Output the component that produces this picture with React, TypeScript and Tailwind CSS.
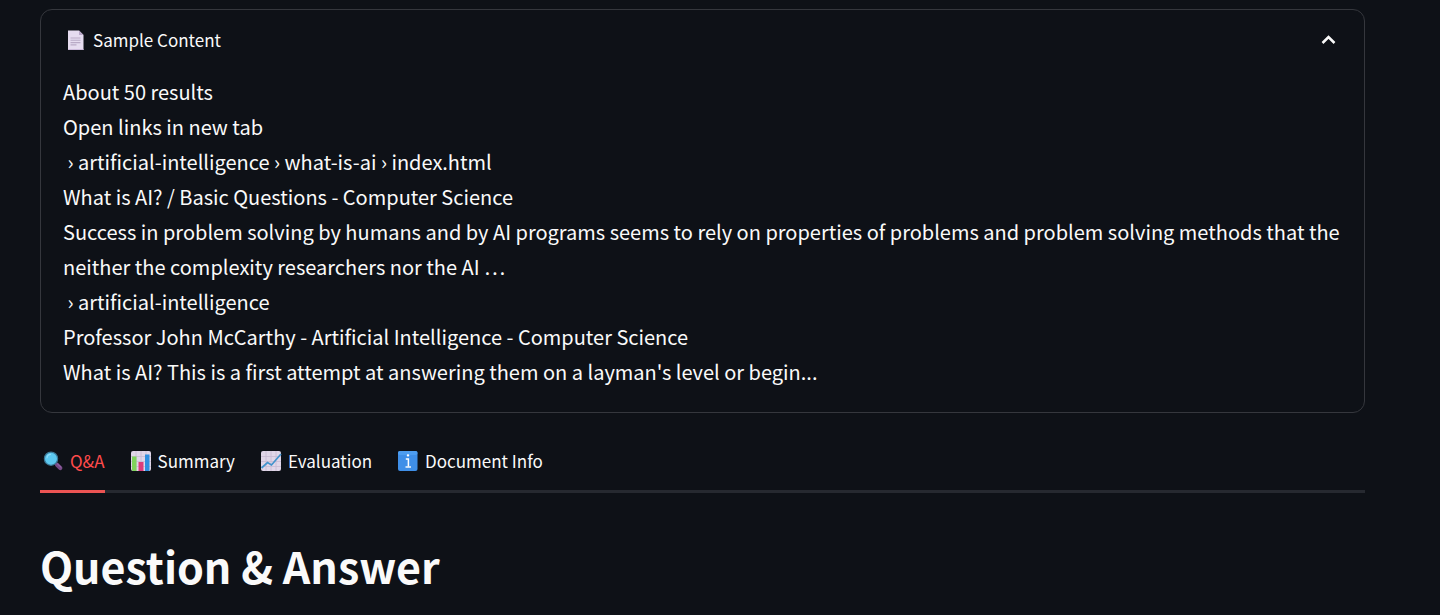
import { useState, type ReactNode } from "react";

function PageIcon() {
  return (
    <svg className="h-[22px] w-[22px] shrink-0" viewBox="0 0 22 22" aria-hidden="true">
      <path d="M3 1.500h11l4.500 4.500v15H3z" fill="#e6dcf0" />
      <path d="M3 20h15.500v1H3z" fill="#cdbbdc" />
      <path d="M14 1.500l4.500 4.500h-4.500z" fill="#b9a8c8" />
      <path d="M5.500 9h10M5.500 11.300h10M5.500 13.600h10M5.500 15.900h6" stroke="#b9aac6" strokeWidth="1.100" />
    </svg>
  );
}

function MagnifierIcon() {
  return (
    <svg className="h-[22px] w-[22px] shrink-0" viewBox="0 0 22 22" aria-hidden="true">
      <path d="M12.500 12.500L15 15" stroke="#9a8fa8" strokeWidth="2" />
      <path d="M15 14.800L18.300 18" stroke="#764a86" strokeWidth="4.200" strokeLinecap="round" />
      <path d="M15.500 14L19 17.300" stroke="#a06cb0" strokeWidth="1" strokeLinecap="round" />
      <circle cx="9" cy="8.700" r="6.600" fill="#5cc8f0" stroke="#3c7896" strokeWidth="1.200" />
      <path d="M5 8.200a4 4 0 0 1 4-3.800" stroke="#8edcf8" strokeWidth="1.200" fill="none" />
    </svg>
  );
}

function ChartTile() {
  return (
    <>
      <rect x="1" y="1" width="20" height="20" rx="2" fill="#e0d6e8" />
      <path d="M1 6.500h20M1 11.500h20M1 16.500h20M6 1v20M11 1v20M16 1v20" stroke="#c6bad2" strokeWidth="0.800" />
    </>
  );
}

function BarsIcon() {
  return (
    <svg className="h-[22px] w-[22px] shrink-0" viewBox="0 0 22 22" aria-hidden="true">
      <ChartTile />
      <path d="M2 6.500h4.500v14.500H3a1 1 0 0 1-1-1z" fill="#7fd35b" />
      <path d="M8.500 12h5v9h-5z" fill="#dc3c7a" />
      <path d="M15 4.500h4.500V20a1 1 0 0 1-1 1H15z" fill="#2f8fe0" />
    </svg>
  );
}

function TrendIcon() {
  return (
    <svg className="h-[22px] w-[22px] shrink-0" viewBox="0 0 22 22" aria-hidden="true">
      <ChartTile />
      <path d="M1.500 18l6-5.500 4 2.500L21 4" stroke="#4193cc" strokeWidth="1.700" fill="none" />
    </svg>
  );
}

function InfoIcon() {
  return (
    <svg className="h-[22px] w-[22px] shrink-0" viewBox="0 0 22 22" aria-hidden="true">
      <rect x="1" y="1" width="19.500" height="20" rx="2" fill="#3f8fe8" />
      <rect x="1" y="1" width="19.500" height="4" rx="2" fill="#4d9df0" />
      <rect x="9.800" y="4.200" width="2.400" height="2.400" rx="1" fill="#fff" />
      <path d="M8.800 9h2.600v7.500" stroke="#fff" strokeWidth="1.500" fill="none" />
      <path d="M8.500 17h5.500" stroke="#fff" strokeWidth="1.400" />
    </svg>
  );
}

const lines = [
  "About 50 results",
  "Open links in new tab",
  "\u00a0› artificial-intelligence › what-is-ai › index.html",
  "What is AI? / Basic Questions - Computer Science",
  "Success in problem solving by humans and by AI programs seems to rely on properties of problems and problem solving methods that the neither the complexity researchers nor the AI …",
  "\u00a0› artificial-intelligence",
  "Professor John McCarthy - Artificial Intelligence - Computer Science",
  "What is AI? This is a first attempt at answering them on a layman's level or begin...",
];

const tabs: { name: string; icon: ReactNode }[] = [
  { name: "Q&A", icon: <MagnifierIcon /> },
  { name: "Summary", icon: <BarsIcon /> },
  { name: "Evaluation", icon: <TrendIcon /> },
  { name: "Document Info", icon: <InfoIcon /> },
];

export default function App() {
  const [open, setOpen] = useState(true);
  const [active, setActive] = useState("Q&A");

  return (
    <main className="min-h-screen bg-[#0e1117] pt-[9px] pr-[75px] pl-10 font-['Noto_Sans_CJK_SC','Noto_Sans',sans-serif] text-[#fafafa]">
      <section className="rounded-xl border border-[#35373d]">
        <button
          type="button"
          aria-expanded={open}
          aria-controls="sample-content"
          onClick={() => setOpen(!open)}
          className="flex h-[59px] w-full items-center gap-1.5 px-6 text-[17px] leading-7"
        >
          <PageIcon />
          <span>Sample Content</span>
          <svg className="ml-auto h-6 w-6" viewBox="0 0 24 24" fill="none" stroke="currentColor" strokeWidth="2.500" aria-hidden="true">
            <path d="M6.500 15l6-6 6 6" />
          </svg>
        </button>
        {open && (
          <div id="sample-content" className="px-[22px] pt-[5px] pb-[23px] text-[20px] leading-[35px]">
            {lines.map((line) => (
              <p key={line}>{line}</p>
            ))}
          </div>
        )}
      </section>

      <div role="tablist" className="mt-[22px] flex gap-[23px] border-b-3 border-[#262930]">
        {tabs.map(({ name, icon }) => (
          <button
            key={name}
            type="button"
            role="tab"
            aria-selected={active === name}
            onClick={() => setActive(name)}
            className={`-mb-[3px] flex h-[58px] items-center gap-1.5 border-b-3 pb-1 pl-0.5 text-[17px] leading-7 ${
              active === name ? "border-[#ec5453] text-[#ff4b4b]" : "border-transparent"
            }`}
          >
            {icon}
            <span>{name}</span>
          </button>
        ))}
      </div>

      <h1 className="mt-[39px] text-[43px] leading-[66px] font-bold">Question &amp; Answer</h1>
    </main>
  );
}
